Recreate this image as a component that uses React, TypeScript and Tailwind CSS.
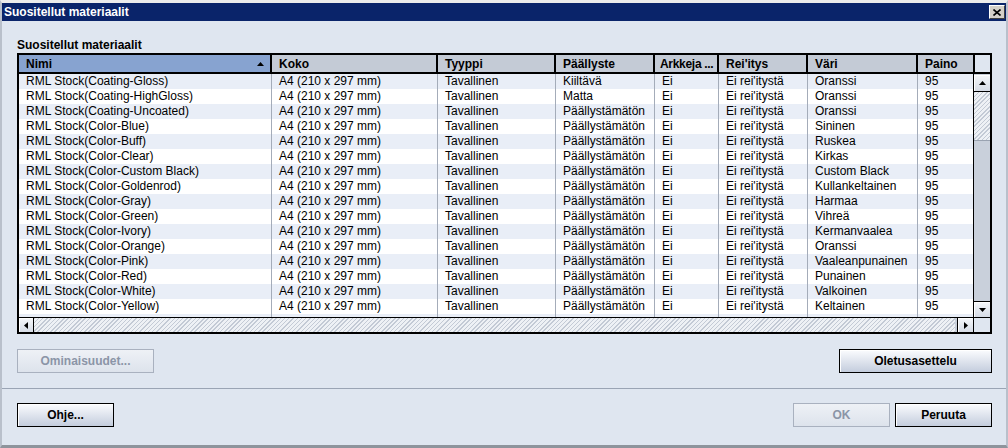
import React from "react";

interface Row {
    name: string;
    coating: string;
    color: string;
}

const rows: Row[] = [
    { name: "RML Stock(Coating-Gloss)", coating: "Kiiltävä", color: "Oranssi" },
    { name: "RML Stock(Coating-HighGloss)", coating: "Matta", color: "Oranssi" },
    { name: "RML Stock(Coating-Uncoated)", coating: "Päällystämätön", color: "Oranssi" },
    { name: "RML Stock(Color-Blue)", coating: "Päällystämätön", color: "Sininen" },
    { name: "RML Stock(Color-Buff)", coating: "Päällystämätön", color: "Ruskea" },
    { name: "RML Stock(Color-Clear)", coating: "Päällystämätön", color: "Kirkas" },
    { name: "RML Stock(Color-Custom Black)", coating: "Päällystämätön", color: "Custom Black" },
    { name: "RML Stock(Color-Goldenrod)", coating: "Päällystämätön", color: "Kullankeltainen" },
    { name: "RML Stock(Color-Gray)", coating: "Päällystämätön", color: "Harmaa" },
    { name: "RML Stock(Color-Green)", coating: "Päällystämätön", color: "Vihreä" },
    { name: "RML Stock(Color-Ivory)", coating: "Päällystämätön", color: "Kermanvaalea" },
    { name: "RML Stock(Color-Orange)", coating: "Päällystämätön", color: "Oranssi" },
    { name: "RML Stock(Color-Pink)", coating: "Päällystämätön", color: "Vaaleanpunainen" },
    { name: "RML Stock(Color-Red)", coating: "Päällystämätön", color: "Punainen" },
    { name: "RML Stock(Color-White)", coating: "Päällystämätön", color: "Valkoinen" },
    { name: "RML Stock(Color-Yellow)", coating: "Päällystämätön", color: "Keltainen" },
];

// widths include the separator line on the right
const headers = [
    { label: "Nimi", w: "w-[253px]" },
    { label: "Koko", w: "w-[166px]" },
    { label: "Tyyppi", w: "w-[118px]" },
    { label: "Päällyste", w: "w-[99px]" },
    { label: "Arkkeja ...", w: "w-[64px]" },
    { label: "Rei'itys", w: "w-[89px]" },
    { label: "Väri", w: "w-[110px]" },
    { label: "Paino", w: "w-[55px]" },
];

const hatch = "bg-[repeating-linear-gradient(135deg,#c3cad5_0px,#c3cad5_1px,#eef1f5_1px,#eef1f5_3px)]";

function Button({ label, w, disabled }: { label: string; w: string; disabled?: boolean }) {
    return (
        <div
            className={`${w} h-[24px] flex items-center justify-center border text-[12px] font-bold ${
                disabled
                    ? "border-[#a9b1bf] text-[#8b95a7] bg-linear-to-b from-[#eef1f6] to-[#dde3ec]"
                    : "border-black text-black bg-linear-to-b from-[#fbfcfe] to-[#c4cddd] shadow-[inset_1px_1px_0_#ffffff]"
            }`}
        >
            {label}
        </div>
    );
}

function Arrow({ dir }: { dir: "up" | "down" | "left" | "right" }) {
    const pts = {
        up: "0,4 7,4 3.5,0",
        down: "0,0 7,0 3.5,4",
        left: "4,0 4,7 0,3.5",
        right: "0,0 0,7 4,3.5",
    }[dir];
    const vertical = dir === "up" || dir === "down";
    return (
        <svg width={vertical ? 7 : 4} height={vertical ? 4 : 7} viewBox={vertical ? "0 0 7 4" : "0 0 4 7"}>
            <polygon points={pts} fill="#000" />
        </svg>
    );
}

function ScrollBtn({ dir, className }: { dir: "up" | "down" | "left" | "right"; className: string }) {
    return (
        <div className={`${className} flex items-center justify-center bg-linear-to-b from-[#f5f7fa] to-[#d6dce6] shadow-[inset_1px_1px_0_#ffffff]`}>
            <Arrow dir={dir} />
        </div>
    );
}

export default function App() {
    return (
        <div className="w-[1008px] h-[448px] flex flex-col bg-[#dfe6f0] border-t-[3px] border-t-[#ececec] border-l-2 border-l-[#b9c0cb] border-r-2 border-r-[#b9c0cb] border-b-[3px] border-b-[#8e949c] font-['Liberation_Sans',Arial,sans-serif] text-black overflow-hidden">
            {/* Title bar */}
            <div className="h-[18px] shrink-0 bg-[#0a246a] flex items-center justify-between pl-[2px] pr-[1px]">
                <span className="text-white text-[12px] font-bold leading-none">Suositellut materiaalit</span>
                <div className="w-[16px] h-[14px] bg-[#d4d0c8] border border-t-white border-l-white border-r-[#404040] border-b-[#404040] flex items-center justify-center">
                    <svg width="8" height="7" viewBox="0 0 8 7">
                        <path d="M0.5 0.5 L7.5 6.5 M7.5 0.5 L0.5 6.5" stroke="#000" strokeWidth="1.6" />
                    </svg>
                </div>
            </div>

            <div className="flex flex-col pl-[15px] pr-[14px] pt-[17px]">
                <div className="h-[14px] text-[12px] font-bold leading-[14px]">Suositellut materiaalit</div>

                {/* Table */}
                <div className="mt-[1px] w-[975px] h-[281px] border-2 border-black flex flex-col bg-white">
                    <div className="flex h-[19px] shrink-0 border-b-2 border-black">
                        {headers.map((h, i) => (
                            <div
                                key={h.label}
                                className={`${h.w} shrink-0 flex items-center text-[12px] font-bold whitespace-nowrap ${
                                    i === 4 ? "pl-[5px] tracking-[-0.3px]" : "pl-[7px] overflow-hidden"
                                } ${i === 0 ? "bg-[#87a3d0] justify-between pr-[6px]" : "bg-[#c4cbd6]"} ${
                                    i < headers.length - 1 ? "border-r-2 border-black" : ""
                                }`}
                            >
                                <span>{h.label}</span>
                                {i === 0 && <Arrow dir="up" />}
                            </div>
                        ))}
                        <div className="flex-1 bg-[#dfe6f0] border-l-2 border-black" />
                    </div>

                    <div className="flex h-[243px] shrink-0">
                        <div className="w-[954px] overflow-hidden">
                            {[...rows, { name: "", coating: "", color: "" }].map((r, idx) => (
                                <div key={idx} className={`flex h-[15px] text-[12px] leading-[15px] ${idx % 2 === 0 ? "bg-[#e9eef7]" : "bg-white"}`}>
                                    <div className="w-[253px] shrink-0 pl-[7px] border-r border-[#a4acb9] whitespace-nowrap overflow-hidden">{r.name}</div>
                                    <div className="w-[166px] shrink-0 pl-[7px] border-r border-[#a4acb9] whitespace-nowrap">{r.name && "A4 (210 x 297 mm)"}</div>
                                    <div className="w-[118px] shrink-0 pl-[7px] border-r border-[#a4acb9]">{r.name && "Tavallinen"}</div>
                                    <div className="w-[99px] shrink-0 pl-[7px] border-r border-[#a4acb9] whitespace-nowrap overflow-hidden">{r.coating}</div>
                                    <div className="w-[64px] shrink-0 pl-[7px] border-r border-[#a4acb9]">{r.name && "Ei"}</div>
                                    <div className="w-[89px] shrink-0 pl-[7px] border-r border-[#a4acb9] whitespace-nowrap">{r.name && "Ei rei'itystä"}</div>
                                    <div className="w-[110px] shrink-0 pl-[7px] border-r border-[#a4acb9] whitespace-nowrap overflow-hidden">{r.color}</div>
                                    <div className="w-[55px] shrink-0 pl-[7px]">{r.name && "95"}</div>
                                </div>
                            ))}
                        </div>
                        {/* Vertical scrollbar */}
                        <div className="flex-1 flex flex-col border-l border-black bg-[#c9d0db]">
                            <ScrollBtn dir="up" className="h-[17px] mt-[1px] border-b border-black" />
                            <div className={`h-[49px] ${hatch} border-b border-[#9aa3b1]`} />
                            <div className="flex-1" />
                            <ScrollBtn dir="down" className="h-[16px] border-t border-black" />
                        </div>
                    </div>

                    {/* Horizontal scrollbar */}
                    <div className="flex flex-1 border-t border-black">
                        <ScrollBtn dir="left" className="w-[15px] border-r border-black" />
                        <div className={`w-[921px] ${hatch}`} />
                        <div className="flex-1 bg-[#c9d0db]" />
                        <ScrollBtn dir="right" className="w-[16px] border-l border-black" />
                        <div className="w-[17px] bg-[#dfe6f0] border-l border-black" />
                    </div>
                </div>

                <div className="mt-[15px] flex justify-between">
                    <Button label="Ominaisuudet..." w="w-[137px]" disabled />
                    <Button label="Oletusasettelu" w="w-[153px]" />
                </div>
            </div>

            <div className="mt-[15px] h-[1px] bg-[#9aa4b4]" />

            <div className="mt-[14px] flex justify-between pl-[15px] pr-[14px]">
                <Button label="Ohje..." w="w-[97px]" />
                <div className="flex gap-[5px]">
                    <Button label="OK" w="w-[97px]" disabled />
                    <Button label="Peruuta" w="w-[97px]" />
                </div>
            </div>
        </div>
    );
}
